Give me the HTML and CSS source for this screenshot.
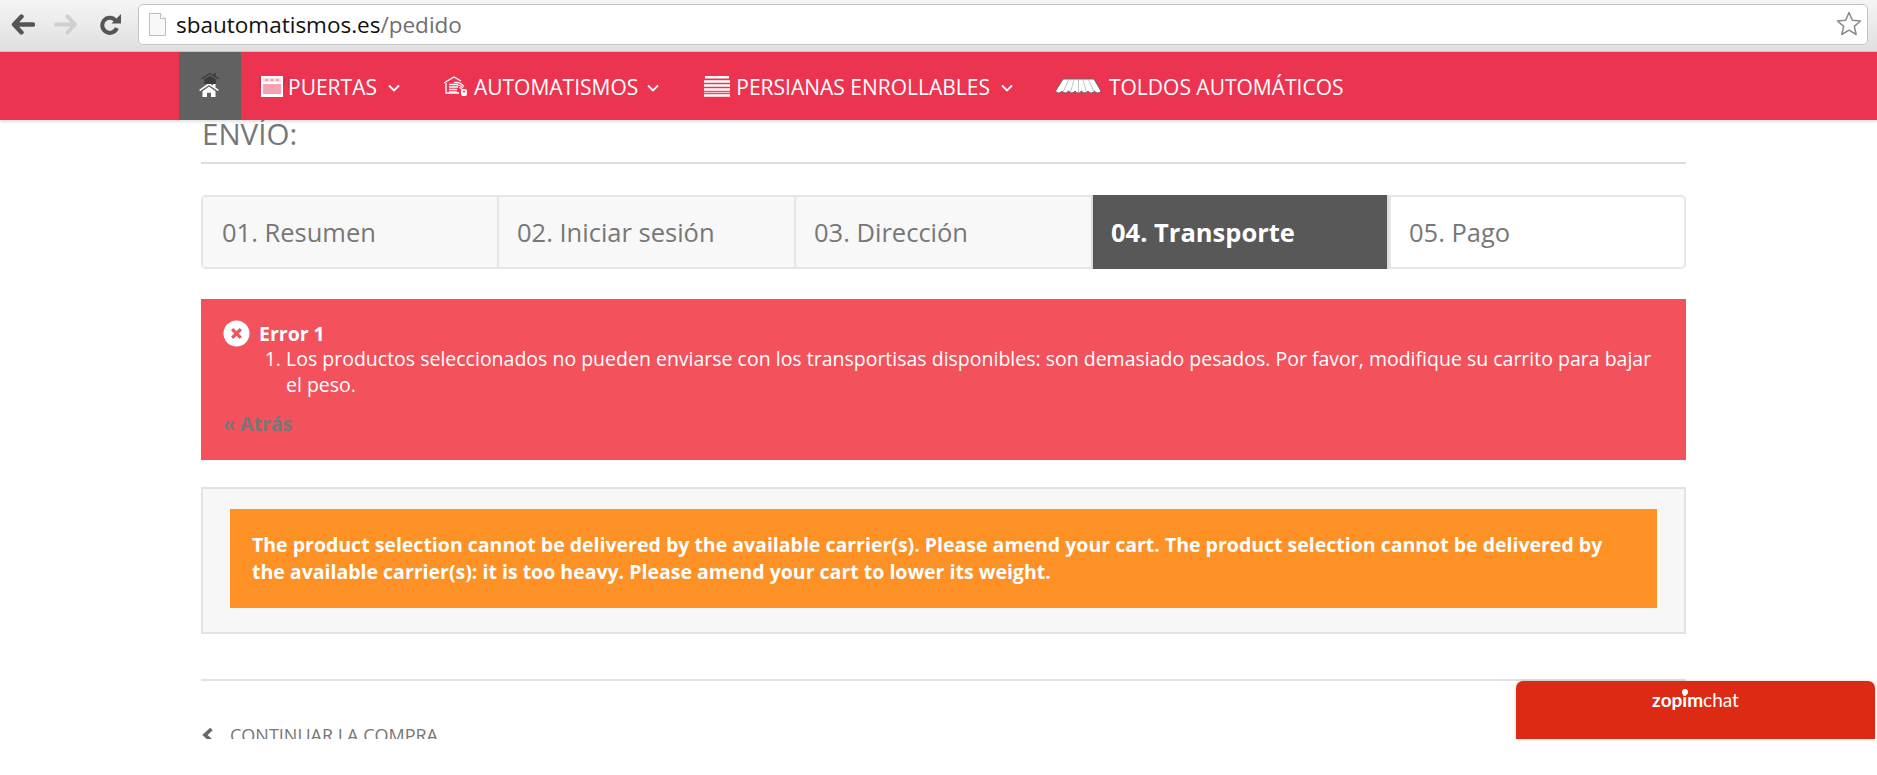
FILE: index.html
```html
<!DOCTYPE html>
<html lang="es">
<head>
<meta charset="utf-8">
<title>Pedido</title>
<link rel="stylesheet" href="styles.css">
</head>
<body>
<header class="browser">
  <svg class="tool tool-back" width="24" height="21" viewBox="0 0 24 21"><path d="M10.500 2.500 3 10.500l7.500 8M4 10.500h18" fill="none" stroke="#555" stroke-width="4.400" stroke-linecap="round" stroke-linejoin="round"/></svg>
  <svg class="tool tool-forward" width="24" height="21" viewBox="0 0 24 21"><path d="M13.500 2.500 21 10.500l-7.500 8M20 10.500H2" fill="none" stroke="#cfcfcf" stroke-width="4" stroke-linecap="round" stroke-linejoin="round"/></svg>
  <svg class="tool tool-reload" width="21" height="21" viewBox="0 0 21 21"><path d="M15.500 6.500a7.500 7.500 0 1 0 1.300 7.500" fill="none" stroke="#555" stroke-width="4"/><path d="M11.500 9.500H21V0z" fill="#555"/></svg>
  <div class="omnibox">
    <svg class="page-icon" width="17" height="23" viewBox="0 0 17 23"><path d="M.5.500h11l5 5v17H.500z" fill="#f8f8f8" stroke="#bdbdbd"/><path d="M11.500.500v5h5" fill="#fff" stroke="#bdbdbd"/></svg>
    <span class="url"><span class="host">sbautomatismos.es</span>/pedido</span>
    <svg class="star" width="26" height="26" viewBox="0 0 26 26"><path d="M13 1.500l3.300 7.700 8.200.8-6.200 5.400 1.900 8.100-7.200-4.300-7.200 4.300 1.900-8.100L1.500 10l8.200-.8z" fill="#fff" stroke="#8a8a8a" stroke-width="1.500" stroke-linejoin="round"/></svg>
  </div>
</header>

<nav class="nav">
  <div class="nav-inner">
    <a class="home">
      <svg width="20" height="15" viewBox="0 0 20 18" preserveAspectRatio="none"><path d="M10 1 0 9.500l1.200 1.300L10 3.500l8.800 7.300L20 9.500 16.500 6.500V2h-2.500v2.400z" fill="#fff"/><path d="M3.500 11 10 5.500l6.500 5.500v7H12v-5H8v5H3.500z" fill="#fff"/></svg>
    </a>
    <svg class="ghost-house" width="18" height="12" viewBox="0 0 20 18" preserveAspectRatio="none"><path d="M10 1 0 9.500l1.200 1.300L10 3.500l8.800 7.300L20 9.500 16.500 6.500V2h-2.500v2.400zM3.500 11 10 5.500l6.500 5.500v7H3.500z" fill="#3c3c3c"/></svg>
    <svg class="ghost-chev" width="8" height="13" viewBox="0 0 8 13"><path d="M1 1l6 5.500L1 12" fill="none" stroke="#555" stroke-opacity=".35"/></svg>
    <span class="ghost">Envío</span>
    <a class="item item-puertas">
      <svg width="22" height="21" viewBox="0 0 22 21"><rect width="22" height="21" fill="#fff"/><rect x="2" y="8" width="18" height="10" fill="#f5a3b1"/><rect x="2" y="2" width="18" height="4" fill="#fbdde2"/><path d="M4 4h3M9.500 4h3M15 4h3" stroke="#f08a9b" stroke-width="1.500"/></svg>
      PUERTAS
      <svg class="chev" width="12" height="8" viewBox="0 0 12 8"><path d="M1 1.500l5 5 5-5" fill="none" stroke="#fff" stroke-width="1.800"/></svg>
    </a>
    <a class="item item-auto">
      <svg width="24" height="20" viewBox="0 0 24 20"><path d="M0 7 10 1l7 4M2 7v10h13M5 8.500h9M5 11h9M5 13.500h8M5 16h8" fill="none" stroke="#fff" stroke-width="1.300"/><path d="M10 6.500q6-1 10 4M13 9q4 0 6 3M15 11.500q2 0 3 2" fill="none" stroke="#fff" stroke-width="1.200"/><rect x="17" y="13" width="6" height="7" rx="2" fill="#fff"/><circle cx="20" cy="15.500" r="1" fill="#ec3350"/></svg>
      AUTOMATISMOS
      <svg class="chev" width="12" height="8" viewBox="0 0 12 8"><path d="M1 1.500l5 5 5-5" fill="none" stroke="#fff" stroke-width="1.800"/></svg>
    </a>
    <a class="item item-pers">
      <svg width="26" height="21" viewBox="0 0 26 21"><path d="M1 1.250h24M0 5.500h26M0 9.500h26M0 13.500h26M0 19.500h26" stroke="#fff" stroke-width="2.500"/><path d="M0 16.500h26" stroke="#f6b5c0" stroke-width="1.500"/></svg>
      PERSIANAS ENROLLABLES
      <svg class="chev" width="12" height="8" viewBox="0 0 12 8"><path d="M1 1.500l5 5 5-5" fill="none" stroke="#fff" stroke-width="1.800"/></svg>
    </a>
    <a class="item item-toldos">
      <svg width="47" height="17" viewBox="0 0 47 17"><path d="M8 1h31l7 12q-3.500 4-6.500 0-3.300 4-6.500 0-3.300 4-6.500 0-3.300 4-6.500 0-3.300 4-6.500 0-3.300 4-6.500 0-3.500 4-6.500 0z" fill="#fff" stroke="#666"/><path d="M13.500 2 8 14M19 2l-3.500 12M23.500 2v12M28 2l3.500 12M33.500 2 39 14" stroke="#c4c4c4"/></svg>
      TOLDOS AUTOMÁTICOS
    </a>
  </div>
</nav>

<main class="main">
  <h1 class="title">ENVÍO:</h1>
  <ul class="steps">
    <li class="step done">01. Resumen</li>
    <li class="step done">02. Iniciar sesión</li>
    <li class="step done">03. Dirección</li>
    <li class="step current">04. Transporte</li>
    <li class="step">05. Pago</li>
  </ul>

  <section class="error">
    <div class="error-head">
      <svg width="27" height="27" viewBox="0 0 28 28"><circle cx="14" cy="14" r="13.500" fill="#fff"/><path d="M9.500 9.500l9 9M18.500 9.500l-9 9" stroke="#f3515c" stroke-width="3.400"/></svg>
      <b>Error 1</b>
    </div>
    <ol class="error-list">
      <li>Los productos seleccionados no pueden enviarse con los transportisas disponibles: son demasiado pesados. Por favor, modifique su carrito para bajar el peso.</li>
    </ol>
    <a class="back">« Atrás</a>
  </section>

  <section class="box">
    <p class="warning">The product selection cannot be delivered by the available carrier(s). Please amend your cart. The product selection cannot be delivered by the available carrier(s): it is too heavy. Please amend your cart to lower its weight.</p>
  </section>

  <hr class="rule">

  <a class="continue">
    <svg width="13" height="16" viewBox="0 0 13 16"><path d="M10.500 2 4 8l6.500 6" fill="none" stroke="#666" stroke-width="3.600"/></svg>
    CONTINUAR LA COMPRA
  </a>
</main>

<aside class="chat">
  <span class="chat-logo">zop<span class="chat-i">i</span>m<span class="chat-light">chat</span></span>
</aside>
</body>
</html>
```

FILE: styles.css
```css
* { box-sizing: border-box; }
html, body { margin: 0; padding: 0; height: 775px; overflow: hidden; background: #fff; }
body { font-family: "Open Sans", "Noto Sans", sans-serif; color: #777; position: relative; }

.browser {
  height: 52px;
  display: flex;
  align-items: flex-start;
  padding: 4px 9px 0 11px;
  background: linear-gradient(#f5f5f5, #dfdfdf);
  border-bottom: 1px solid #c8c8c8;
}
.tool { flex: none; margin-top: 10px; }
.tool-forward { margin-left: 19px; }
.tool-reload { margin-left: 22px; }
.omnibox {
  flex: 1;
  height: 41px;
  margin-left: 17px;
  display: flex;
  align-items: center;
  padding: 0 5px 0 10px;
  background: #fff;
  border: 1px solid #c4c4c4;
  border-radius: 5px;
  box-shadow: 0 1px 1px #e8e8e8;
}
.page-icon { flex: none; margin-right: 10px; }
.url { flex: 1; font-size: 22.500px; color: #6f6f6f; white-space: nowrap; }
.host { color: #111; }
.star { flex: none; margin-top: -2px; }

.nav { height: 68px; background: #ec3350; box-shadow: 0 2px 3px rgba(0,0,0,.12); position: relative; z-index: 2; }
.nav-inner { height: 100%; margin-left: 179px; display: flex; align-items: center; position: relative; }
.home { width: 62px; height: 100%; background: #616161; display: flex; align-items: center; justify-content: center; padding: 6px 2px 0 0; }
.ghost { position: absolute; left: 79px; top: 18px; font-size: 17px; line-height: 23px; color: rgba(110,40,50,.3); }
.ghost-house { position: absolute; left: 22px; top: 20px; }
.ghost-chev { position: absolute; left: 57px; top: 21px; }
.item { display: flex; align-items: center; color: #fff; font-size: 21px; white-space: nowrap; position: relative; padding-top: 2px; }
.item svg { flex: none; margin-top: -2px; }
.item .chev { margin: 2px 0 0; }
.item-puertas { margin-left: 20px; }
.item-puertas svg:first-child { margin-right: 5px; }
.item-puertas .chev { margin-left: 11px; }
.item-auto { margin-left: 44px; }
.item-auto svg:first-child { margin-right: 6px; }
.item-auto .chev { margin-left: 9px; }
.item-pers { margin-left: 45px; }
.item-pers svg:first-child { margin-right: 6px; }
.item-pers .chev { margin-left: 11px; }
.item-toldos { margin-left: 42px; }
.item-toldos svg { margin-right: 7px; }

.main { height: 619px; margin: 0 191px 0 201px; overflow: hidden; }
.title {
  margin: 0;
  height: 44px;
  padding-left: 1px;
  font-size: 29.500px;
  line-height: 28px;
  font-weight: 400;
  color: #777;
  border-bottom: 2px solid #dcdcdc;
}
.steps {
  list-style: none;
  margin: 31px 0 0;
  padding: 0;
  height: 74px;
  display: grid;
  grid-template-columns: 294px 297px 297px 298px 1fr;
  border: 2px solid #e6e6e6;
  border-radius: 5px;
}
.step {
  display: flex;
  align-items: center;
  padding-left: 18px;
  font-size: 25.500px;
  color: #777;
  border-left: 2px solid #e6e6e6;
}
.step:first-child { border-left: 0; padding-left: 19px; }
.done { background: #f8f8f8; }
.current { background: #585858; color: #fff; font-weight: 700; margin: -2px 0; border-left-color: #dcdcdc; border-right: 2px solid #dcdcdc; }

.error {
  margin-top: 30px;
  height: 161px;
  padding: 21px 20px 0 21px;
  background: #f3515c;
  color: #fff;
  font-size: 19.500px;
  line-height: 26px;
}
.error-head { display: flex; align-items: center; height: 27px; margin-left: 1px; }
.error-head b { margin-left: 9px; font-weight: 700; }
.error-list { margin: -1px 0 0; padding: 0 0 0 64px; }
.back { display: block; margin-top: 13px; font-weight: 700; color: #777; margin-left: 1px; }

.box {
  margin-top: 27px;
  height: 147px;
  padding: 20px 27px 0;
  background: #f7f7f7;
  border: 2px solid #e2e2e2;
}
.warning {
  margin: 0;
  height: 99px;
  padding: 22px 40px 0 22px;
  background: #fe9126;
  color: #fff;
  font-size: 19.500px;
  line-height: 27px;
  font-weight: 700;
}
.rule { margin: 45px 0 0; height: 2px; border: 0; background: #e2e2e2; }
.continue { display: flex; align-items: center; margin-top: 42px; font-size: 18px; color: #777; line-height: 24px; }
.continue svg { margin-right: 16px; flex: none; }

.chat {
  position: absolute;
  left: 1516px;
  top: 681px;
  width: 359px;
  height: 58px;
  padding-top: 7px;
  background: #dc2a14;
  border-radius: 7px 7px 0 0;
  box-shadow: 0 0 3px rgba(0,0,0,.2);
  text-align: center;
  color: #fff;
  font-family: "Lato", sans-serif;
  font-size: 19px;
  line-height: 24px;
  font-weight: 700;
}
.chat-light { font-weight: 400; }
.chat-i { position: relative; }
.chat-i::before { content: ""; position: absolute; left: 0; top: 1px; width: 6px; height: 6px; border-radius: 50%; background: #fff; }
```
